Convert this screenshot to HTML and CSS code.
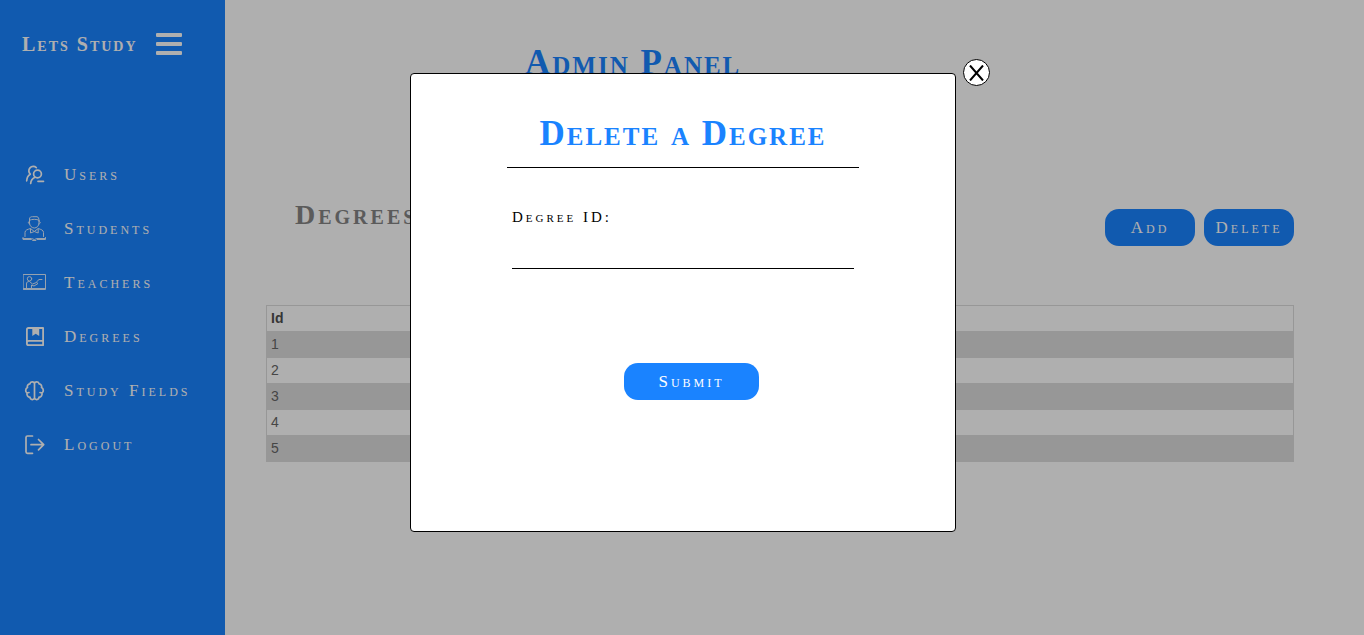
FILE: index.html
```html
<!DOCTYPE html>
<html lang="en">
<head>
<meta charset="utf-8">
<title>Lets Study - Admin Panel</title>
<link rel="stylesheet" href="styles.css">
</head>
<body>
<div class="layout">
  <aside class="sidebar">
    <div class="brand">
      <span class="brand-name">Lets Study</span>
      <button class="menu-toggle" type="button" aria-label="Toggle menu">
        <svg width="26" height="24" viewBox="0 0 26 24" fill="currentColor"><rect y="1" width="26" height="4" rx="1"/><rect y="10" width="26" height="4" rx="1"/><rect y="19" width="26" height="4" rx="1"/></svg>
      </button>
    </div>
    <nav class="nav">
      <a class="nav-link" href="#users">
        <svg class="icon" viewBox="0 0 26 26" stroke-width="1.7"><circle cx="15.5" cy="12" r="3.9"/><path d="M14.3 5.600A4.300 4.300 0 1 0 8.300 12.200C6 13.500 4.800 15.800 4.700 18.800M13 15.300C10.300 16.500 8.800 18.800 8.700 21.500M16 19.300H21.500"/></svg>
        <span>Users</span>
      </a>
      <a class="nav-link" href="#students">
        <svg class="icon icon-fine" viewBox="0 0 26 26"><path d="M7.500 4.500V3C7.500 1 9 .7 10.500 .7H15C16.500 1 17 2.500 17 4.500M7.500 4.200C10 3 14.500 3 17 4.200M7.500 4.500V7C7.500 10 10 12 12.300 12S17 10 17 7V4.500M7.500 5.500C5.800 5 5.800 8 7.700 8M17 5.500C18.800 5 18.800 8 16.900 8M3 20.500V16.500C3 14 5.500 13.500 8.500 12.500L12.300 15.500L16.200 12.500C19 13.500 21.500 14 21.500 16.500V20.500M8.500 13V17L12.300 15.500L16.200 17V13M1 21.500V23.500H9.500L10.500 24.500H14L15 23.500H23.500V21.500M1 22.500H9.500L12.300 23.500L15 22.500H23.500"/></svg>
        <span>Students</span>
      </a>
      <a class="nav-link" href="#teachers">
        <svg class="icon icon-fine" viewBox="0 0 26 26"><path d="M1.500 4.500H23.500V19.500H1.500ZM1.500 18.500H23.500M4.500 18.500V14C4.500 12 5.500 11.500 7.500 11.500L10.500 14L14.500 12.500L16 13.500L12 16L9.500 15V18.500M14.500 12L17 9.500H20"/><circle cx="7.500" cy="8.800" r="2.200"/></svg>
        <span>Teachers</span>
      </a>
      <a class="nav-link" href="#degrees">
        <svg class="icon" viewBox="0 0 26 26" stroke-width="1.8"><path d="M21.100 16.800V4H6.500Q4.900 4 4.900 5.600V19.500Q4.900 21.200 6.600 21.200H21.100V16.800H6.800Q4.900 16.800 4.900 18.800"/><path d="M10.300 4V12L13.700 9.800L17.200 12V4Z" fill="currentColor" stroke="none"/></svg>
        <span>Degrees</span>
      </a>
      <a class="nav-link" href="#study-fields">
        <svg class="icon" viewBox="0 0 26 26" stroke-width="1.700"><path d="M12.500 5.500C12 3.200 8.300 3.200 7.900 5.900C5.900 6 4.800 8 5.500 9.500C3.200 10.500 3.200 14 5 15C4.600 17.300 6 19 7.900 19.200C8.300 22.300 12 22.300 12.500 19.700ZM12.500 5.500C13 3.200 16.700 3.200 17.100 5.900C19.100 6 20.200 8 19.500 9.500C21.800 10.500 21.800 14 20 15C20.400 17.300 19 19 17.100 19.200C16.700 22.300 13 22.300 12.500 19.700M5 15L7 14.500M20 15L18 14.500"/></svg>
        <span>Study Fields</span>
      </a>
      <a class="nav-link" href="#logout">
        <svg class="icon" viewBox="0 0 26 26" stroke-width="1.700"><path d="M10.500 4H5.500Q4 4 4 5.500V19.800Q4 21.300 5.500 21.300H10.500M9 12.700H21.500M16.500 7.500L21.700 12.700L16.500 17.900"/></svg>
        <span>Logout</span>
      </a>
    </nav>
  </aside>

  <main class="content">
    <h1 class="page-title">Admin Panel</h1>
    <div class="section-head">
      <h2 class="section-title">Degrees</h2>
      <div class="actions">
        <button class="btn" type="button">Add</button>
        <button class="btn" type="button">Delete</button>
      </div>
    </div>
    <table class="table">
      <thead><tr><th scope="col">Id</th></tr></thead>
      <tbody>
        <tr><td>1</td></tr>
        <tr><td>2</td></tr>
        <tr><td>3</td></tr>
        <tr><td>4</td></tr>
        <tr><td>5</td></tr>
      </tbody>
    </table>
  </main>
</div>

<div class="backdrop">
  <div class="modal" role="dialog" aria-modal="true" aria-labelledby="dialog-title">
    <button class="close" type="button" aria-label="Close">
      <svg width="15" height="16" viewBox="0 0 15 16" fill="none" stroke="currentColor" stroke-width="2"><path d="M1 .5L14 15.500M14 .5L1 15.500"/></svg>
    </button>
    <h2 class="modal-title" id="dialog-title">Delete a Degree</h2>
    <form class="form">
      <label class="label" for="degree-id">Degree ID:</label>
      <input class="input" id="degree-id" type="text">
      <button class="btn btn-submit" type="submit">Submit</button>
    </form>
  </div>
</div>
</body>
</html>
```
FILE: styles.css
```css
* {
  box-sizing: border-box;
}

body {
  margin: 0;
  font-family: "Liberation Serif", "Times New Roman", serif;
  background: #fff;
}

.layout {
  display: flex;
  min-height: 100vh;
}

.sidebar {
  flex: 0 0 225px;
  padding: 32px 22px;
  background: #1a83ff;
  color: #fff;
}

.brand {
  display: flex;
  align-items: center;
  gap: 18px;
  height: 24px;
}

.brand-name {
  font-size: 20px;
  font-weight: bold;
  font-variant: small-caps;
  letter-spacing: 2px;
  white-space: nowrap;
}

.menu-toggle {
  display: flex;
  padding: 0;
  border: 0;
  background: none;
  color: inherit;
}

.nav {
  display: flex;
  flex-direction: column;
  gap: 28px;
  margin-top: 106px;
}

.nav-link {
  display: flex;
  align-items: center;
  gap: 16px;
  height: 26px;
  color: inherit;
  font-size: 17px;
  font-variant: small-caps;
  letter-spacing: 3px;
  text-decoration: none;
  white-space: nowrap;
}

.icon {
  flex: none;
  width: 26px;
  height: 26px;
  fill: none;
  stroke: currentColor;
  stroke-linecap: round;
  stroke-linejoin: round;
}

.icon-fine {
  stroke-width: 1;
  opacity: 0.85;
}

.content {
  flex: 1;
  padding: 43px 70px 40px 41px;
}

.page-title {
  margin: 0 0 0 259px;
  color: #1a83ff;
  font-size: 35px;
  line-height: 40px;
  font-variant: small-caps;
  letter-spacing: 2px;
}

.section-head {
  display: flex;
  align-items: flex-end;
  justify-content: space-between;
  margin: 117px 0 59px;
  padding-left: 29px;
}

.section-title {
  align-self: flex-start;
  margin: 0;
  color: #858585;
  font-size: 28px;
  line-height: 30px;
  font-variant: small-caps;
  letter-spacing: 3px;
}

.actions {
  display: flex;
  gap: 9px;
  padding-top: 9px;
}

.btn {
  width: 90px;
  height: 37px;
  padding: 0;
  border: 0;
  border-radius: 14px;
  background: #1a83ff;
  color: #fff;
  font-family: inherit;
  font-size: 17px;
  font-variant: small-caps;
  letter-spacing: 3px;
}

.table {
  width: 100%;
  border: 1px solid #ddd;
  border-collapse: collapse;
  color: #666;
  font: 14px/17px "Liberation Sans", Arial, sans-serif;
  text-align: left;
}

.table th,
.table td {
  padding: 4px;
}

.table th {
  color: #4f4f4f;
}

.table tr {
  border: 1px solid #ddd;
}

.table tbody tr:nth-child(odd) {
  background: #ddd;
}

.backdrop {
  position: fixed;
  inset: 0;
  display: flex;
  align-items: flex-start;
  justify-content: center;
  padding: 73px 0 0 2px;
  background: #00000050;
}

.modal {
  position: relative;
  width: 546px;
  padding: 40px 96px 131px;
  border: 1px solid #000;
  border-radius: 4px;
  background: #fff;
}

.close {
  position: absolute;
  top: -15px;
  right: -35px;
  display: flex;
  align-items: center;
  justify-content: center;
  width: 27px;
  height: 27px;
  padding: 0;
  border: 1px solid #000;
  border-radius: 50%;
  background: #fff;
  color: #000;
}

.modal-title {
  margin: 0;
  padding-bottom: 13px;
  border-bottom: 1px solid #000;
  color: #1a83ff;
  font-size: 35px;
  line-height: 40px;
  font-variant: small-caps;
  letter-spacing: 2px;
  text-align: center;
  white-space: nowrap;
}

.form {
  display: flex;
  flex-direction: column;
  padding: 40px 5px 0;
}

.label {
  font-size: 15px;
  line-height: 18px;
  font-variant: small-caps;
  letter-spacing: 3px;
}

.input {
  width: 100%;
  height: 43px;
  padding: 8px 0;
  border: 0;
  border-bottom: 1px solid #000;
  outline: 0;
  font: inherit;
}

.btn-submit {
  width: 135px;
  margin: 94px 0 0 112px;
}
```
